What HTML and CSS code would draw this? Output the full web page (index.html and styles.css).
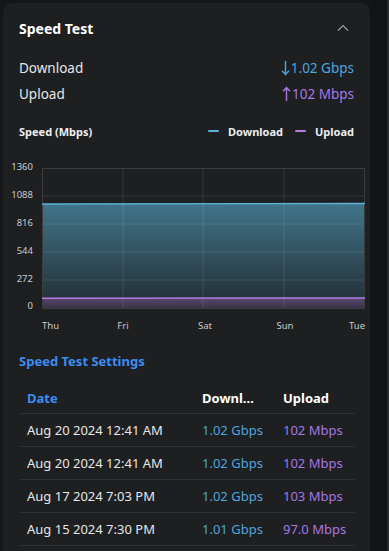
FILE: index.html
```html
<!DOCTYPE html>
<html lang="en">
<head>
  <meta charset="UTF-8">
  <title>Speed Test</title>
  <link rel="stylesheet" href="styles.css">
</head>
<body>
  <div class="panel">
    <div class="panel-head">
      <h1>Speed Test</h1>
      <svg class="chevron" width="12" height="8" viewBox="0 0 12 8">
        <path d="M1 6.5 L6 1.5 L11 6.5" fill="none" stroke="#9a9ca0" stroke-width="1.2"/>
      </svg>
    </div>

    <div class="stats">
      <div class="stat-row">
        <span>Download</span>
        <span class="stat down">
          <svg width="9" height="16" viewBox="0 0 9 16"><path d="M4.5 1 V14.5 M1 10.8 L4.5 14.5 L8 10.8" fill="none" stroke="currentColor" stroke-width="1.4"/></svg>1.02 Gbps
        </span>
      </div>
      <div class="stat-row">
        <span>Upload</span>
        <span class="stat up">
          <svg width="9" height="16" viewBox="0 0 9 16"><path d="M4.5 15 V1.5 M1 5.2 L4.5 1.5 L8 5.2" fill="none" stroke="currentColor" stroke-width="1.4"/></svg>102 Mbps
        </span>
      </div>
    </div>

    <div class="chart-head">
      <span class="chart-title">Speed (Mbps)</span>
      <span class="legend"><i class="swatch blue"></i>Download</span>
      <span class="legend"><i class="swatch purple"></i>Upload</span>
    </div>

    <svg class="chart" width="367" height="180" viewBox="0 0 367 180">
      <defs>
        <linearGradient id="dlFill" x1="0" y1="0" x2="0" y2="1">
          <stop offset="0" stop-color="#407489"/>
          <stop offset="1" stop-color="#222c33"/>
        </linearGradient>
        <linearGradient id="ulFill" x1="0" y1="0" x2="0" y2="1">
          <stop offset="0" stop-color="#5a4773"/>
          <stop offset="1" stop-color="#3a3346"/>
        </linearGradient>
      </defs>
      <rect x="39" y="49" width="323" height="104" fill="url(#dlFill)"/>
      <rect x="39" y="143" width="323" height="10" fill="url(#ulFill)"/>
      <g stroke="rgba(255,255,255,0.1)" stroke-width="1">
        <line x1="39" y1="41" x2="362" y2="41"/>
        <line x1="39" y1="69" x2="362" y2="69"/>
        <line x1="39" y1="97" x2="362" y2="97"/>
        <line x1="39" y1="125" x2="362" y2="125"/>
        <line x1="120" y1="13" x2="120" y2="153"/>
        <line x1="200" y1="13" x2="200" y2="153"/>
        <line x1="281" y1="13" x2="281" y2="153"/>
      </g>
      <rect x="39.5" y="13.5" width="322" height="140" fill="none" stroke="#3a3c40"/>
      <line x1="39" y1="49" x2="362" y2="48.5" stroke="#5db3da" stroke-width="1.3"/>
      <line x1="39" y1="143.3" x2="362" y2="143" stroke="#b27be6" stroke-width="1.5"/>
      <g class="axis" text-anchor="end">
        <text x="30" y="14.5">1360</text>
        <text x="30" y="42.5">1088</text>
        <text x="30" y="70.5">816</text>
        <text x="30" y="98.5">544</text>
        <text x="30" y="126.5">272</text>
        <text x="30" y="154">0</text>
      </g>
      <g class="axis" text-anchor="middle">
        <text x="39" y="174" text-anchor="start">Thu</text>
        <text x="120" y="174">Fri</text>
        <text x="202" y="174">Sat</text>
        <text x="282" y="174">Sun</text>
        <text x="362" y="174" text-anchor="end">Tue</text>
      </g>
    </svg>

    <h2>Speed Test Settings</h2>

    <table class="results">
      <thead>
        <tr>
          <th class="date">Date</th>
          <th><span class="clip">Downl…</span></th>
          <th>Upload</th>
        </tr>
      </thead>
      <tbody>
        <tr><td>Aug 20 2024 12:41 AM</td><td class="dl">1.02 Gbps</td><td class="ul">102 Mbps</td></tr>
        <tr><td>Aug 20 2024 12:41 AM</td><td class="dl">1.02 Gbps</td><td class="ul">102 Mbps</td></tr>
        <tr><td>Aug 17 2024 7:03 PM</td><td class="dl">1.02 Gbps</td><td class="ul">103 Mbps</td></tr>
        <tr><td>Aug 15 2024 7:30 PM</td><td class="dl">1.01 Gbps</td><td class="ul">97.0 Mbps</td></tr>
      </tbody>
    </table>
  </div>
  <div class="rail"></div>
</body>
</html>
```

FILE: styles.css
```css
html, body {
  margin: 0;
  height: 100%;
}
body {
  font-family: 'Noto Sans', 'Open Sans', Arial, sans-serif;
  background: #151618;
  color: #e6e7e9;
  display: flex;
  overflow: hidden;
}
.panel {
  width: 367px;
  margin: 3px 0 0 3px;
  padding: 0 16px;
  box-sizing: border-box;
  background: #1e1f21;
  border-radius: 10px 10px 0 0;
  flex-shrink: 0;
}
.rail {
  width: 17px;
  background: #131416;
  border-right: 2px solid #2a2b2e;
}
.panel-head {
  display: flex;
  align-items: center;
  justify-content: space-between;
  height: 50px;
}
.panel-head h1 {
  margin: 0;
  font-size: 14px;
  font-weight: 700;
  color: #fff;
}
.chevron {
  margin-right: 5px;
}
.stats {
  margin-top: 2px;
}
.stat-row {
  display: flex;
  justify-content: space-between;
  align-items: center;
  height: 26px;
  font-size: 13.5px;
  color: #e6e7e9;
}
.stat {
  display: flex;
  align-items: center;
  gap: 1px;
}
.stat.down {
  color: #4fa6dd;
}
.stat.up {
  color: #a877e4;
}
.chart-head {
  display: flex;
  align-items: center;
  height: 20px;
  margin-top: 14px;
  font-size: 11px;
  font-weight: 700;
  color: #eceef0;
}
.chart-title {
  flex: 1;
}
.legend {
  display: flex;
  align-items: center;
  margin-left: 12px;
}
.swatch {
  width: 11px;
  height: 2px;
  margin-right: 9px;
  border-radius: 1px;
}
.swatch.blue {
  background: #5db3da;
}
.swatch.purple {
  background: #b27be6;
}
.chart {
  display: block;
  margin: 14px -16px 0 -16px;
}
.axis text {
  font-size: 9.5px;
  fill: #c9ccd1;
}
h2 {
  margin: 8px 0 0;
  height: 36px;
  line-height: 36px;
  font-size: 13px;
  font-weight: 700;
  color: #3b8ef0;
}
.results {
  width: 336px;
  border-collapse: collapse;
  table-layout: fixed;
  font-size: 13px;
  margin-top: 3px;
}
.results th, .results td {
  height: 32px;
  padding: 0 8px;
  text-align: left;
  border-bottom: 1px solid #2e3034;
  white-space: nowrap;
}
.results th {
  height: 31px;
  font-weight: 700;
  color: #fff;
}
.results th:nth-child(1) { width: 159px; }
.results th:nth-child(2) { width: 65px; }
.results th.date {
  color: #3b8ef0;
}
.clip {
  display: block;
}
.results td {
  color: #e6e7e9;
}
.results td.dl {
  color: #4fa6dd;
}
.results td.ul {
  color: #a877e4;
}
```
